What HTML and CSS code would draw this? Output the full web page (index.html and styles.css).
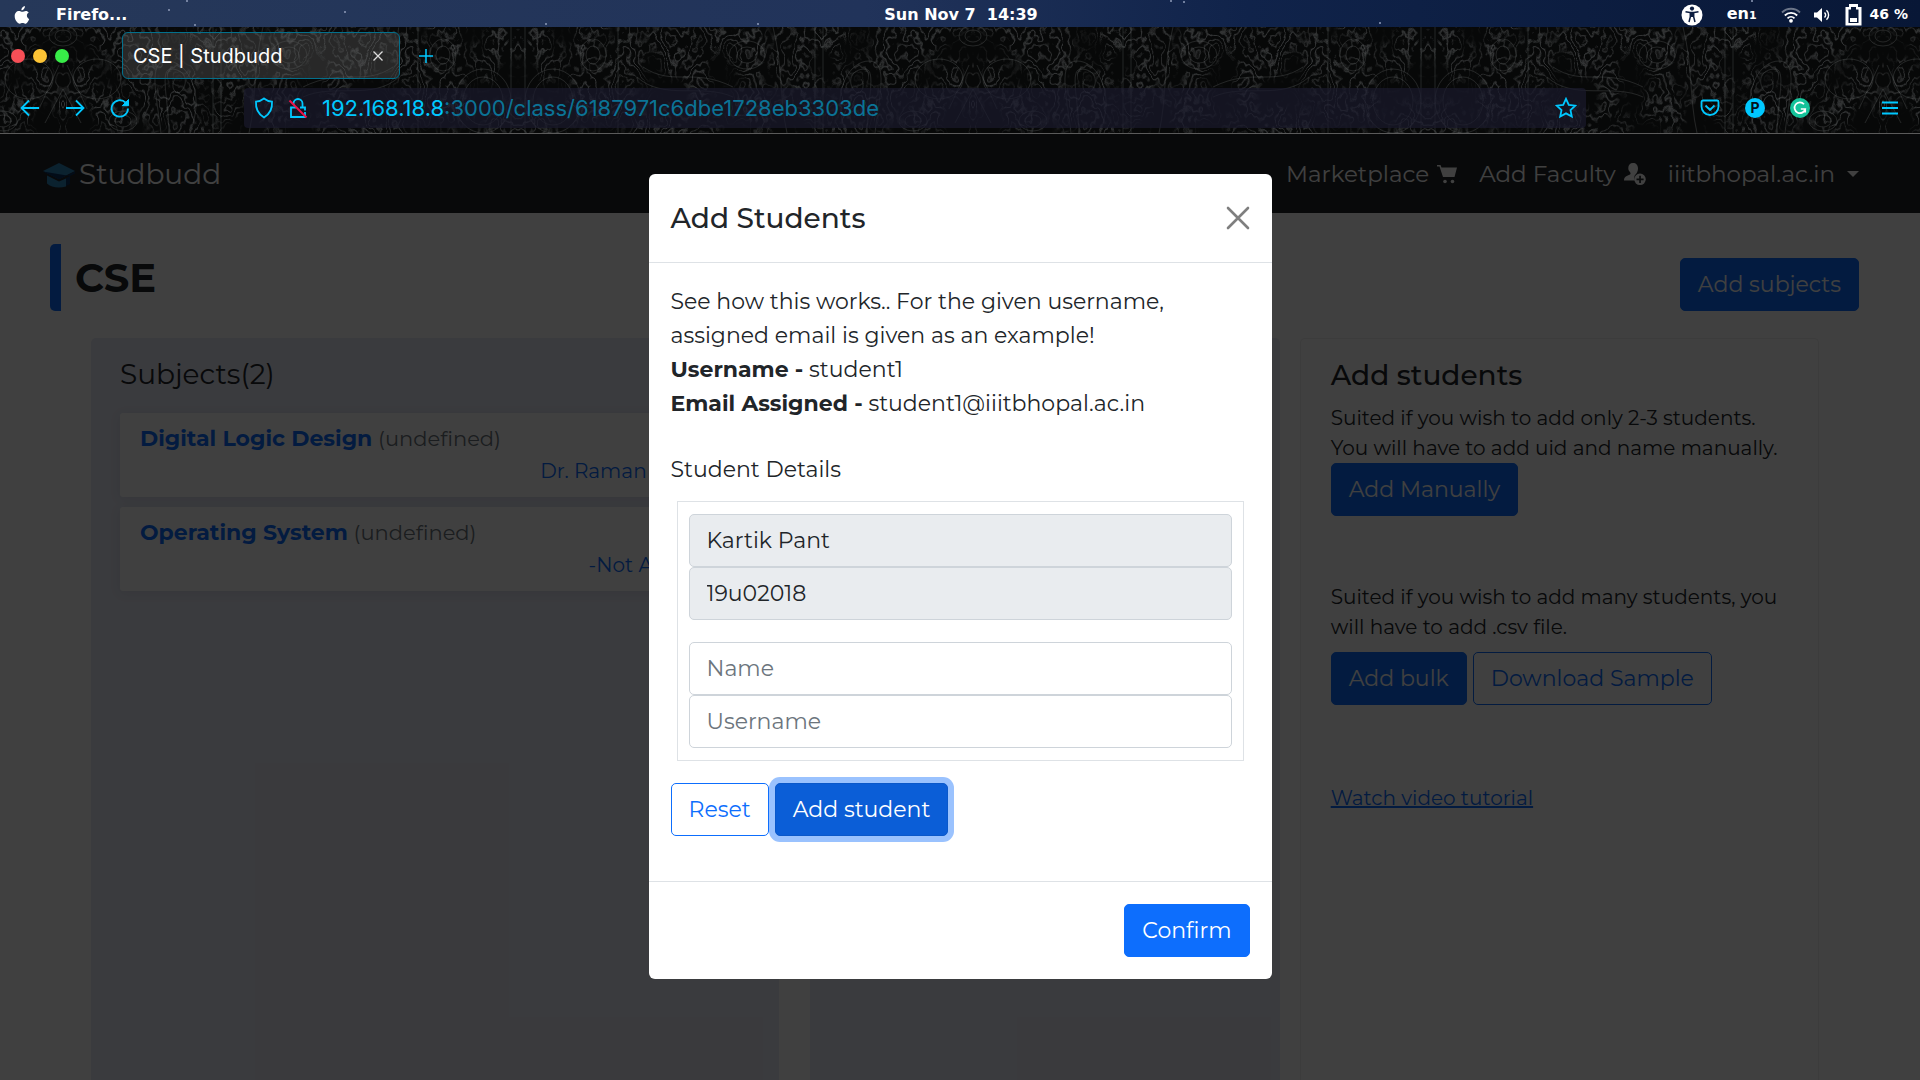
FILE: index.html
```html
<!DOCTYPE html>
<html lang="en">
<head>
<meta charset="utf-8">
<meta name="viewport" content="width=device-width, initial-scale=1">
<title>CSE | Studbudd</title>
<link rel="stylesheet" href="styles.css">
</head>
<body>

<header class="menubar">
  <svg class="stars" width="100%" height="27" aria-hidden="true">
    <g fill="#8f9cba">
      <circle cx="169" cy="10" r="1"/><circle cx="187" cy="1" r="1"/><circle cx="345" cy="12" r="1"/><circle cx="195" cy="25" r="1"/>
      <circle cx="546" cy="24" r="1"/><circle cx="758" cy="24" r="1"/><circle cx="1171" cy="1" r="1"/><circle cx="1184" cy="2" r="1"/>
      <circle cx="1380" cy="23" r="1"/><circle cx="1752" cy="1" r="1"/>
    </g>
  </svg>
  <div class="menubar-left">
    <svg width="16" height="20" viewBox="0 0 16 20" aria-label="System menu"><path fill="#fff" d="M10.9 1c.1 1.200-.3 2.200-1 3C9.300 4.800 8.300 5.400 7.400 5.300 7.300 4.200 7.800 3.200 8.400 2.500 9 1.700 10.100 1.100 10.900 1zM14.700 7.400c-1.200.8-1.800 1.800-1.800 3.100 0 1.600.9 2.900 2.300 3.400-.6 1.900-2.200 4.800-3.900 4.800-1 0-1.600-.6-2.700-.6-1.200 0-1.900.6-2.800.6C3.600 18.700.700 15 .700 11.300c0-3.300 2-5.300 4.300-5.300 1.300 0 2.400.8 3.300.8.800 0 2.100-.9 3.600-.9 1.100 0 2.200.6 2.800 1.500z"/></svg>
    <span>Firefo...</span>
  </div>
  <time class="clock">Sun Nov 7&nbsp; 14:39</time>
  <div class="menubar-right">
    <svg width="22" height="22" viewBox="0 0 22 22" aria-label="Accessibility"><circle cx="11" cy="11" r="10.500" fill="#fff"/><circle cx="11" cy="4.600" r="2.100" fill="#0b1c40"/><path d="M4.500 7.800L9 8.600h4l4.500-.8M9.300 9v4L8 18M12.700 9v4L14 18" fill="none" stroke="#0b1c40" stroke-width="1.500"/><path d="M9 8.500h4V13H9z" fill="#0b1c40"/></svg>
    <span class="lang">en<small>1</small></span>
    <svg class="wifi" width="20" height="16" viewBox="0 0 20 16" fill="none" stroke="#fff" stroke-width="1.800" aria-label="Wi-Fi"><path d="M1 5.500c5-5 13-5 18 0" opacity=".4"/><path d="M3.800 8.500c3.500-3.400 9-3.400 12.400 0M6.500 11.300c2-1.900 5-1.900 7 0"/><circle cx="10" cy="13.800" r="1" fill="#fff"/></svg>
    <svg class="volume" width="18" height="16" viewBox="0 0 18 16" aria-label="Volume"><path d="M1 5.500h3l5-4.500v14l-5-4.500H1z" fill="#fff"/><path d="M11.500 5.500c1.300 1.400 1.300 3.600 0 5M13.500 3.200c2.800 2.600 2.800 7 0 9.600" fill="none" stroke="#fff" stroke-width="1.400"/></svg>
    <svg class="battery" width="17" height="22" viewBox="0 0 17 22" aria-label="Battery"><path fill="#fff" fill-rule="evenodd" d="M4 0h9v3h3.500v18.500H.5V3H4zM6 3v2.500H3.500V19h10V5.500H11V3z"/><path d="M5 14h7v4H5z" fill="#fff"/></svg>
    <span class="charge">46 %</span>
  </div>
</header>

<section class="browser">
  <svg class="texture" width="100%" height="106" aria-hidden="true">
    <defs>
      <filter id="contours" x="0" y="0" width="100%" height="100%" color-interpolation-filters="sRGB">
        <feTurbulence type="fractalNoise" baseFrequency=".03 .022" numOctaves="4" seed="7" result="noise"/>
        <feColorMatrix in="noise" values="0 0 0 0 .62  0 0 0 0 .63  0 0 0 0 .64  1 0 0 0 0"/>
        <feComponentTransfer result="lines"><feFuncA type="table" tableValues="0 0 0 0 .2 0 0 0 .2 0 0 0 .25 0 0 0 .3 0 0 0 .3 0 0 0 .25 0 0 0 .2 0 0 0 .2 0 0 0 0"/></feComponentTransfer>
        <feColorMatrix in="noise" values="0 0 0 0 1  0 0 0 0 1  0 0 0 0 1  0 4 0 0 -1.300" result="patches"/>
        <feComposite in="lines" in2="patches" operator="in"/>
      </filter>
      <g id="carving">
        <rect width="455" height="106" filter="url(#contours)"/>
        <g fill="none" stroke="#8a8c8e" stroke-opacity=".22">
          <ellipse cx="0" cy="9" rx="14" ry="10"/><ellipse cx="0" cy="9" rx="8" ry="6"/>
          <ellipse cx="34" cy="52" rx="24" ry="20"/><path d="M4 38L24 82M0 62L18 96"/>
          <path d="M98 106C94 70 84 34 104 34s36 30 26 62M106 106c0-30-10-64 2-64s18 10 12 20-14-2-8-10"/>
          <ellipse cx="60" cy="94" rx="14" ry="10"/><ellipse cx="60" cy="94" rx="8" ry="6"/>
          <path d="M150 0v106M158 0v106M200 0C190 40 194 70 186 106"/>
          <ellipse cx="226" cy="28" rx="18" ry="14"/><ellipse cx="226" cy="28" rx="10" ry="8"/>
          <path d="M240 60c40-20 60 0 90-20M240 70c30-14 70 4 96-20"/>
          <ellipse cx="380" cy="28" rx="13" ry="16"/><ellipse cx="380" cy="28" rx="7" ry="9"/>
          <ellipse cx="420" cy="74" rx="28" ry="32"/><ellipse cx="420" cy="74" rx="20" ry="24"/>
          <path d="M355 0v106M448 0v106"/>
        </g>
      </g>
      <pattern id="relief" x="63" width="910" height="106" patternUnits="userSpaceOnUse">
        <use href="#carving"/><use href="#carving" transform="translate(910 0) scale(-1 1)"/>
      </pattern>
    </defs>
    <rect width="100%" height="106" fill="#070808"/>
    <rect width="100%" height="106" fill="url(#relief)"/>
  </svg>

  <div class="tabs">
    <div class="window-buttons">
      <button class="dot red" aria-label="Close window"></button>
      <button class="dot yellow" aria-label="Minimise window"></button>
      <button class="dot green" aria-label="Maximise window"></button>
    </div>
    <div class="tab">
      <span>CSE | Studbudd</span>
      <button class="bare" aria-label="Close tab"><svg width="10" height="10" viewBox="0 0 10 10" stroke="#ddd" stroke-width="1.300"><path d="M.5.500l9 9M9.500.500l-9 9"/></svg></button>
    </div>
    <button class="bare" aria-label="New tab"><svg width="16" height="16" viewBox="0 0 16 16" stroke="#00c8ff" stroke-width="1.500"><path d="M8 1v14M1 8h14"/></svg></button>
  </div>

  <div class="toolbar">
    <div class="nav-buttons">
      <button class="bare" aria-label="Back"><svg class="line" width="20" height="20" viewBox="0 0 20 20"><path d="M19 10H1.500M9 2.500L1.500 10 9 17.500"/></svg></button>
      <button class="bare" aria-label="Forward"><svg class="line" width="20" height="20" viewBox="0 0 20 20"><path d="M1 10h17.500M11 2.500l7.500 7.500-7.500 7.500"/></svg></button>
      <button class="bare" aria-label="Reload"><svg class="line" width="20" height="20" viewBox="0 0 20 20"><path d="M18 10.500A8.200 8.200 0 1 1 15.500 4.500"/><path d="M18.500 1.500v6.200h-6.200z" fill="#00c8ff" stroke-width="1"/></svg></button>
    </div>
    <div class="address">
      <svg class="line" width="20" height="22" viewBox="0 0 20 22" aria-label="Tracking protection"><path d="M10 1.500c2.500 2 5 3 8 3.200.5 6.500-1 11.500-8 15.800C3 16.200 1.500 11.200 2 4.700 5 4.500 7.500 3.500 10 1.500z"/></svg>
      <svg class="line" width="20" height="22" viewBox="0 0 20 22" aria-label="Connection not secure"><path d="M8 10.500H3v9.500h14v-5M12 10.500h5v3M5.500 8V6.500a4.500 4.500 0 0 1 9 0v4"/><path d="M1.500 3.500l17 17" stroke="#f0124a" stroke-width="2"/></svg>
      <div class="url" role="textbox" tabindex="0" aria-label="Address"><b>192.168.18.8</b>:3000/class/6187971c6dbe1728eb3303de</div>
      <button class="bare" aria-label="Bookmark this page"><svg class="line" width="22" height="22" viewBox="0 0 22 22"><path d="M11 1.800l2.800 6 6.500.8-4.800 4.500 1.300 6.500L11 16.400l-5.800 3.200 1.300-6.500L1.700 8.600l6.500-.8z"/></svg></button>
    </div>
    <div class="extensions">
      <button class="bare" aria-label="Save to Pocket"><svg class="line" width="20" height="18" viewBox="0 0 20 18"><path d="M3 1.500h14a1.500 1.500 0 0 1 1.500 1.500v4.500a8.500 8.500 0 0 1-17 0V3A1.500 1.500 0 0 1 3 1.500zM5.500 6.500L10 11l4.500-4.500"/></svg></button>
      <button class="badge" aria-label="P extension">P</button>
      <button class="bare" aria-label="Grammar checker"><svg width="20" height="20" viewBox="0 0 20 20"><circle cx="10" cy="10" r="10" fill="#15c39a"/><path d="M14 6.200A5.400 5.400 0 1 0 15.200 11H10.800M15.200 10.500V14.500" fill="none" stroke="#fff" stroke-width="1.700"/></svg></button>
    </div>
    <button class="bare" aria-label="Open menu"><svg class="line" width="16" height="14" viewBox="0 0 16 14"><path d="M0 1.500h16M0 7h16M0 12.500h16"/></svg></button>
  </div>
</section>

<div class="app">
  <nav class="navbar">
    <a class="brand" href="#"><svg width="36" height="28" viewBox="0 0 36 28" aria-hidden="true"><path d="M18 3L34 11 18 19 2 11z" fill="#2f86bd"/><path d="M6 15.500l12 6 7-3v8c-7 2-15 1-19-3z" fill="#2f86bd"/><path d="M2 11.500l16 8 16-8v2L25 18v8l4-2v-8" fill="#0b3260"/></svg>Studbudd</a>
    <div class="nav-links">
      <a href="#">Marketplace <svg width="20" height="20" viewBox="0 0 20 20" fill="#fff" aria-hidden="true"><path d="M0 1h3.500l1 2.500H20L17.500 13H6L2.500 2.500H0z"/><circle cx="8" cy="17.500" r="1.800"/><circle cx="15.500" cy="17.500" r="1.800"/></svg></a>
      <a href="#">Add Faculty <svg width="22" height="24" viewBox="0 0 22 24" fill="#fff" aria-hidden="true"><path d="M9 1c3 0 5 2 5 5.500 0 2.500-1 4.500-2.300 5.700-1.700 1.600-2 4.200-.7 6.300H0c0-4 3-4.500 6-6C7 12 6.500 11 6 10 4.500 8.500 4.300 7.500 4.300 6 4.300 3 6 1 9 1z"/><path fill-rule="evenodd" d="M16 11.500a5.800 5.800 0 1 1 0 11.600 5.800 5.800 0 0 1 0-11.600zM15.200 13.800v2.700h-2.700v1.700h2.700v2.700h1.700v-2.700h2.700v-1.700h-2.700v-2.700z"/></svg></a>
      <a href="#">iiitbhopal.ac.in <span class="caret"></span></a>
    </div>
  </nav>

  <main>
    <div class="page-head">
      <h1>CSE</h1>
      <button class="btn primary">Add subjects</button>
    </div>
    <div class="panels">
      <section class="panel subjects">
        <h2>Subjects(2)</h2>
        <article class="subject">
          <h3><a href="#">Digital Logic Design</a> <span>(undefined)</span></h3>
          <p>Dr. Raman Sharma</p>
        </article>
        <article class="subject">
          <h3><a href="#">Operating System</a> <span>(undefined)</span></h3>
          <p>-Not Assigned</p>
        </article>
      </section>
      <section class="panel middle" aria-label="Students"></section>
      <section class="panel students">
        <h2>Add students</h2>
        <p>Suited if you wish to add only 2-3 students.<br>You will have to add uid and name manually.</p>
        <button class="btn primary">Add Manually</button>
        <p class="bulk">Suited if you wish to add many students, you will have to add .csv file.</p>
        <div class="actions">
          <button class="btn primary">Add bulk</button>
          <button class="btn outline">Download Sample</button>
        </div>
        <a class="tutorial" href="#">Watch video tutorial</a>
      </section>
    </div>
  </main>

  <div class="backdrop">
    <div class="modal" role="dialog" aria-modal="true" aria-labelledby="modal-title">
      <div class="modal-head">
        <h2 id="modal-title">Add Students</h2>
        <button class="bare" aria-label="Close"><svg width="24" height="24" viewBox="0 0 24 24" stroke="#7f7f7f" stroke-width="2.600" stroke-linecap="round"><path d="M2 2l20 20M22 2L2 22"/></svg></button>
      </div>
      <div class="modal-body">
        <p>See how this works.. For the given username,<br>assigned email is given as an example!<br>
        <b>Username -</b> student1<br>
        <b>Email Assigned -</b> student1@iiitbhopal.ac.in</p>
        <form>
          <p id="details">Student Details</p>
          <div class="fields" role="group" aria-labelledby="details">
            <div class="pair">
              <input type="text" value="Kartik Pant" aria-label="Name of student 1" disabled>
              <input type="text" value="19u02018" aria-label="Username of student 1" disabled>
            </div>
            <div class="pair">
              <input type="text" placeholder="Name" aria-label="Name">
              <input type="text" placeholder="Username" aria-label="Username">
            </div>
          </div>
          <div class="actions">
            <button type="button" class="btn outline">Reset</button>
            <button type="button" class="btn primary focused">Add student</button>
          </div>
        </form>
      </div>
      <div class="modal-foot">
        <button class="btn primary">Confirm</button>
      </div>
    </div>
  </div>
</div>

</body>
</html>
```
FILE: styles.css
```css
* { box-sizing: border-box; }

body {
  margin: 0;
  min-height: 100vh;
  display: flex;
  flex-direction: column;
  font: 22px/34px Montserrat, Inter, sans-serif;
  color: #212529;
}

h1, h2, h3, p { margin: 0; font-weight: 400; }
a { color: #0d6efd; text-decoration: none; }
button, input { font: inherit; }
svg { display: block; flex: none; }

.bare {
  padding: 0;
  border: 0;
  background: none;
  display: flex;
  cursor: pointer;
}

/* desktop menu bar */
.menubar {
  position: relative;
  height: 27px;
  padding: 0 12px 0 14px;
  display: grid;
  grid-template-columns: 1fr auto 1fr;
  align-items: center;
  background: linear-gradient(90deg, #263859, #21335a 45%, #10234a 65%, #081736);
  color: #fff;
  font: bold 16px/27px "DejaVu Sans", sans-serif;
}
.stars { position: absolute; inset: 0; }
.menubar-left, .menubar-right { display: flex; align-items: center; }
.menubar-left { gap: 26px; }
.menubar-right { justify-content: flex-end; }
.lang { margin-left: 24px; }
.lang small { font-size: 11px; }
.wifi { margin-left: 24px; }
.volume { margin-left: 12px; }
.battery { margin-left: 14px; }
.charge { margin-left: 8px; font-size: 14px; }

/* browser window */
.browser {
  position: relative;
  padding: 5px 0;
  border-bottom: 1px solid #5a5a5a;
  background: #070808;
}
.texture { position: absolute; inset: 0; }
.tabs, .toolbar { position: relative; display: flex; align-items: center; }
.tabs { height: 47px; gap: 18px; padding-left: 11px; margin-bottom: 9px; }
.window-buttons { display: flex; gap: 8px; width: 93px; }
.dot { width: 14px; height: 14px; padding: 0; border: 0; border-radius: 50%; }
.red { background: #f74f57; }
.yellow { background: #fdc435; }
.green { background: #38ec48; }
.tab {
  width: 278px;
  height: 47px;
  padding: 0 16px 0 10px;
  display: flex;
  align-items: center;
  justify-content: space-between;
  border: 1px solid #03708c;
  border-radius: 6px;
  background: rgba(90, 90, 90, .4);
  color: #fff;
  font: 20px/24px Inter, sans-serif;
}
.toolbar { height: 40px; padding-right: 22px; }
.line { fill: none; stroke: #00c8ff; stroke-width: 1.8px; }
.nav-buttons { display: flex; gap: 25px; width: 244px; padding-left: 20px; }
.address {
  flex: 1;
  height: 40px;
  padding: 0 9px 0 10px;
  display: flex;
  align-items: center;
  gap: 14px;
  border-radius: 4px;
  background: rgba(26, 26, 44, .7);
}
.url { flex: 1; color: #0b7396; font: 22px/40px Inter, sans-serif; }
.url b { color: #00c8ff; font-weight: 400; }
.extensions { display: flex; align-items: center; gap: 25px; width: 182px; margin-left: 114px; }
.badge {
  width: 20px;
  height: 20px;
  padding: 0;
  border: 0;
  border-radius: 50%;
  background: #00c8ff;
  color: #041018;
  font: bold 14px/20px Inter, sans-serif;
}

/* application */
.app {
  position: relative;
  flex: 1;
  display: flex;
  flex-direction: column;
  background: #fff;
}
.navbar {
  height: 79px;
  padding: 0 61px 0 41px;
  display: flex;
  align-items: center;
  justify-content: space-between;
  background: #212529;
}
.navbar a { display: flex; align-items: center; color: #fff; }
.brand { gap: 2px; font-size: 28px; }
.nav-links { display: flex; gap: 22px; font-size: 23px; }
.nav-links a { gap: 8px; }
.caret {
  margin-left: 4px;
  border: 6px solid transparent;
  border-top-color: #fff;
  border-bottom: 0;
}

main { flex: 1; display: flex; flex-direction: column; }
.page-head {
  padding: 31px 61px 27px 50px;
  display: flex;
  align-items: flex-end;
  justify-content: space-between;
}
h1 {
  padding: 0 14px;
  border-left: 11px solid #0d6efd;
  border-radius: 5px 0 0 5px;
  font-size: 40px;
  font-weight: 700;
  line-height: 67px;
}
h2 { font-size: 28px; font-weight: 500; line-height: 36px; }

.panels {
  flex: 1;
  display: grid;
  grid-template-columns: 719fr 489fr 519fr;
  padding: 0 101px 0 91px;
}
.panel { min-width: 0; border-radius: 5px 5px 0 0; }
.subjects { margin-right: 31px; padding: 18px 29px; background: #e6e9f5; }
.subjects h2 { margin-bottom: 21px; font-weight: 400; }
.middle { margin-right: 20px; background: #e6e9f5; }
.students {
  padding: 18px 30px;
  border: 1px solid #efefef;
  border-bottom: 0;
  font-size: 20px;
  line-height: 30px;
}
.students h2 { margin-bottom: 10px; }
.students .btn { font-size: 22px; }
.students .bulk { margin: 66px 0 10px; }
.tutorial { display: inline-block; margin-top: 78px; text-decoration: underline; }

.subject {
  margin-bottom: 10px;
  padding: 10px 20px;
  border-radius: 3px;
  background: #fff;
  box-shadow: 0 2px 12px rgba(0, 20, 60, .08);
  line-height: 32px;
}
.subject h3 { font-size: 22px; }
.subject h3 a { font-weight: 700; }
.subject h3 span { color: #6c757d; font-size: 21px; }
.subject p { color: #0d6efd; font-size: 20px; text-align: right; }

.btn {
  padding: 9px 17px;
  border: 1px solid #0d6efd;
  border-radius: 5px;
  line-height: 33px;
  cursor: pointer;
}
.primary { background: #0d6efd; color: #fff; }
.outline { background: transparent; color: #0d6efd; }
.focused {
  border-color: #0a58ca;
  background: #0b5ed7;
  box-shadow: 0 0 0 6px #9ac2fe;
}
.actions { display: flex; gap: 6px; }

/* dialog */
.backdrop {
  position: absolute;
  inset: 0;
  padding: 40px 0;
  background: rgba(0, 0, 0, .75);
}
.modal {
  max-width: 623px;
  margin: 0 auto;
  border-radius: 6px;
  background: #fff;
}
.modal-head {
  height: 89px;
  padding: 0 22px;
  display: flex;
  align-items: center;
  justify-content: space-between;
  border-bottom: 1px solid #dee2e6;
}
.modal-body { padding: 22px 22px 45px; }
form { margin-top: 32px; }
.fields {
  margin: 14px 6px 22px;
  padding: 12px 11px;
  display: grid;
  gap: 22px;
  border: 1px solid #dee2e6;
}
.pair { display: grid; }
input {
  width: 100%;
  height: 53px;
  padding: 0 17px;
  border: 1px solid #ced4da;
  border-radius: 5px;
  background: #fff;
  color: #212529;
}
input:disabled { background: #e9ecef; }
input::placeholder { color: #6c757d; opacity: 1; }
.modal-foot {
  padding: 22px;
  display: flex;
  justify-content: flex-end;
  border-top: 1px solid #dee2e6;
}
```
